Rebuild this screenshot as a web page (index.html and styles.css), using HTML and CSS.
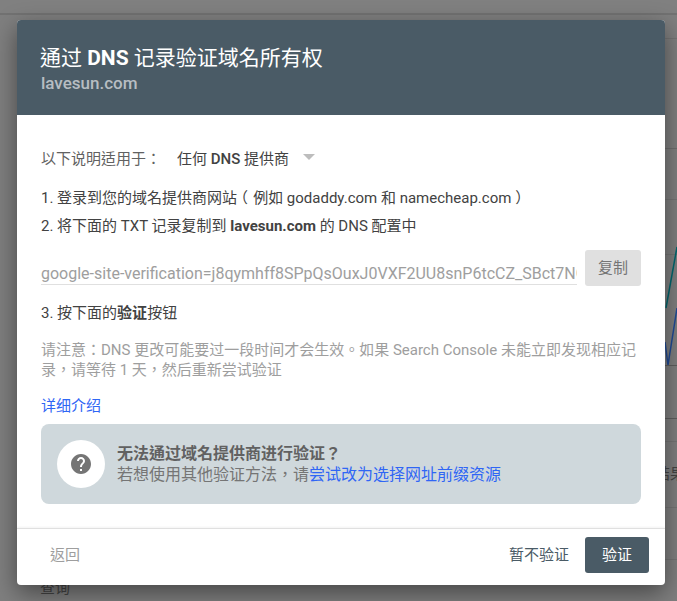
FILE: index.html

```html
<!DOCTYPE html>
<html lang="en">
<head>
    <meta charset="UTF-8">
    <meta name="viewport" content="width=device-width, initial-scale=1.0">
    <title>通过 DNS 记录验证域名所有权</title>
    <link rel="stylesheet" href="styles.css">
</head>
<body>
    <div class="backdrop">
        <div class="bg-topbar"></div>
        <div class="bg-line bg-line-1"></div>
        <div class="bg-line bg-line-2"></div>
        <div class="bg-line bg-line-3"></div>
        <div class="bg-line bg-line-4"></div>
        <div class="bg-line bg-line-5"></div>
        <div class="bg-line bg-line-6"></div>
        <div class="bg-line bg-line-7"></div>
        <div class="bg-line bg-line-8"></div>
        <div class="bg-line bg-line-9"></div>
        <svg class="bg-chart" width="17" height="125" viewBox="660 245 17 125">
            <path d="M677 247 L666 308" stroke="#00666e" stroke-width="1.5" fill="none"/>
            <path d="M665 342 L668 365 L677 308" stroke="#1f4a96" stroke-width="1.5" fill="none"/>
        </svg>
        <span class="bg-text bg-text-result">结果</span>
        <span class="bg-text bg-text-query">查询</span>
    </div>

    <div class="dialog">
        <div class="dialog-header">
            <h2>通过 <b>DNS</b> 记录验证域名所有权</h2>
            <div class="domain">lavesun.com</div>
        </div>
        <div class="dialog-body">
            <div class="provider-row">
                <span class="provider-label">以下说明适用于：</span>
                <span class="provider-select">任何 <b>DNS</b> 提供商</span>
                <span class="caret"></span>
            </div>
            <p class="step">1. 登录到您的域名提供商网站<span class="paren-open">（</span>例如 godaddy.com 和 namecheap.com<span class="paren-close">）</span></p>
            <p class="step">2. 将下面的 TXT 记录复制到 <b>lavesun.com</b> 的 DNS 配置中</p>
            <div class="record-row">
                <div class="record">google-site-verification=j8qymhff8SPpQsOuxJ0VXF2UU8snP6tcCZ_SBct7NGc</div>
                <button class="copy-btn">复制</button>
            </div>
            <p class="step">3. 按下面的<b>验证</b>按钮</p>
            <p class="note">请注意：DNS 更改可能要过一段时间才会生效。如果 Search Console 未能立即发现相应记录，请等待 1 天，然后重新尝试验证</p>
            <a class="more-link" href="#">详细介绍</a>
            <div class="help-box">
                <div class="help-icon">
                    <svg width="20" height="20" viewBox="2 2 20 20"><path fill="#757575" d="M12 2C6.480 2 2 6.480 2 12s4.480 10 10 10 10-4.480 10-10S17.520 2 12 2zm1 17h-2v-2h2v2zm2.070-7.750l-.9.920C13.450 12.900 13 13.500 13 15h-2v-.5c0-1.100.45-2.100 1.170-2.830l1.240-1.260c.37-.36.59-.86.59-1.410 0-1.100-.9-2-2-2s-2 .9-2 2H8c0-2.210 1.790-4 4-4s4 1.790 4 4c0 .88-.36 1.680-.93 2.250z"/></svg>
                </div>
                <div class="help-text">
                    <div class="help-title">无法通过域名提供商进行验证？</div>
                    <div>若想使用其他验证方法，请<a href="#">尝试改为选择网址前缀资源</a></div>
                </div>
            </div>
        </div>
        <div class="dialog-footer">
            <button class="back-btn">返回</button>
            <div class="footer-right">
                <button class="later-btn">暂不验证</button>
                <button class="verify-btn">验证</button>
            </div>
        </div>
    </div>
</body>
</html>
```

FILE: styles.css

```css
html, body {
    margin: 0;
    height: 100%;
}
body {
    background-color: #7f7f7f;
    font-family: Roboto, "Noto Sans CJK TC", sans-serif;
    overflow: hidden;
    padding: 20px 12px 0 17px;
    box-sizing: border-box;
}
.backdrop {
    position: absolute;
    top: 0;
    left: 0;
    width: 677px;
    height: 601px;
    overflow: hidden;
}
.bg-topbar {
    height: 13px;
    background-color: #808080;
    border-bottom: 2px solid #727272;
}
.bg-line {
    position: absolute;
    left: 600px;
    right: 0;
    height: 1px;
    background-color: #747474;
}
.bg-line-1 { top: 38px; }
.bg-line-2 { top: 148px; background-color: #6e6e6e; }
.bg-line-3 { top: 199px; }
.bg-line-4 { top: 254px; }
.bg-line-5 { top: 365px; background-color: #5f5f5f; }
.bg-line-6 { top: 418px; background-color: #5f5f5f; }
.bg-line-7 { top: 441px; }
.bg-line-8 { top: 507px; }
.bg-line-9 { top: 559px; }
.bg-chart {
    position: absolute;
    left: 660px;
    top: 245px;
}
.bg-text {
    position: absolute;
    font-size: 15px;
    line-height: 20px;
    white-space: nowrap;
    color: #444;
}
.bg-text-result { left: 655px; top: 464px; }
.bg-text-query { left: 40px; top: 578px; }

.dialog {
    position: relative;
    width: 648px;
    height: 565px;
    background-color: #fff;
    border-radius: 4px;
    box-shadow: 0 8px 24px rgba(0,0,0,0.45);
    display: flex;
    flex-direction: column;
    overflow: hidden;
}
.dialog-header {
    height: 95px;
    box-sizing: border-box;
    padding: 24px 24px 0 23px;
    background-color: #4a5b66;
    color: #fff;
}
.dialog-header h2 {
    margin: 0;
    font-size: 21px;
    font-weight: 400;
    line-height: 29px;
}
.dialog-header b {
    font-weight: 700;
}
.domain {
    margin-left: 1px;
    font-size: 17px;
    font-weight: 500;
    line-height: 20px;
    color: #b7bdc2;
}
.dialog-body {
    flex: 1;
    padding: 0 24px;
    font-size: 15px;
    color: #424242;
}
.provider-row {
    display: flex;
    align-items: center;
    height: 20px;
    margin-top: 32px;
}
.provider-label {
    width: 136px;
    color: #616161;
}
.provider-select {
    color: #424242;
}
.provider-select b {
    font-weight: 500;
}
.caret {
    margin-left: 14px;
    border-left: 6.5px solid transparent;
    border-right: 6.5px solid transparent;
    border-top: 6px solid #bdbdbd;
}
.step {
    margin: 0;
    line-height: 28px;
}
.provider-row + .step {
    margin-top: 17px;
}
.step b {
    font-weight: 700;
}
/* the parens sit in the middle of their box in the original */
.paren-open {
    margin-left: -4px;
    margin-right: 5px;
}
.paren-close {
    margin-left: 4px;
}
.record-row {
    display: flex;
    justify-content: space-between;
    height: 36px;
    margin-top: 10px;
    margin-bottom: 13px;
}
.record {
    width: 536px;
    height: 35px;
    box-sizing: border-box;
    overflow: hidden;
    white-space: nowrap;
    line-height: 48px;
    font-size: 16px;
    color: #9e9e9e;
    border-bottom: 1px solid #e0e0e0;
}
.copy-btn {
    width: 56px;
    height: 36px;
    padding: 0 0 3px;
    border: none;
    border-radius: 3px;
    background-color: #e0e0e0;
    color: #757575;
    font: inherit;
}
.note {
    margin: 13px 0 0;
    line-height: 20px;
    color: #9e9e9e;
}
.more-link {
    display: block;
    margin-top: 15px;
    line-height: 22px;
    color: #2f66f5;
    text-decoration: none;
}
.help-box {
    display: flex;
    align-items: center;
    gap: 12px;
    height: 80px;
    margin-top: 7px;
    padding-left: 16px;
    border-radius: 8px;
    background-color: #cfd8dc;
}
.help-icon {
    display: flex;
    align-items: center;
    justify-content: center;
    width: 48px;
    height: 48px;
    border-radius: 50%;
    background-color: #fff;
}
.help-text {
    font-size: 16px;
    line-height: 21px;
    color: #757575;
}
.help-title {
    font-weight: 700;
    color: #616161;
}
.help-text a {
    color: #2f66f5;
    text-decoration: none;
}
.dialog-footer {
    display: flex;
    justify-content: space-between;
    align-items: flex-start;
    height: 57px;
    box-sizing: border-box;
    padding: 8px 16px 0;
    border-top: 1px solid #e0e0e0;
    box-shadow: 0 -1px 2px rgba(0,0,0,0.05);
}
.footer-right {
    display: flex;
    align-items: center;
}
.dialog-footer button {
    height: 36px;
    padding: 0 17px 4px;
    border: none;
    border-radius: 3px;
    background: none;
    font: inherit;
    font-size: 15px;
}
.dialog-footer .back-btn {
    color: #9e9e9e;
}
.dialog-footer .later-btn {
    color: #4a5b66;
    padding: 0 16px 4px;
}
.dialog-footer .verify-btn {
    background-color: #4a5b66;
    color: #fff;
}
```
